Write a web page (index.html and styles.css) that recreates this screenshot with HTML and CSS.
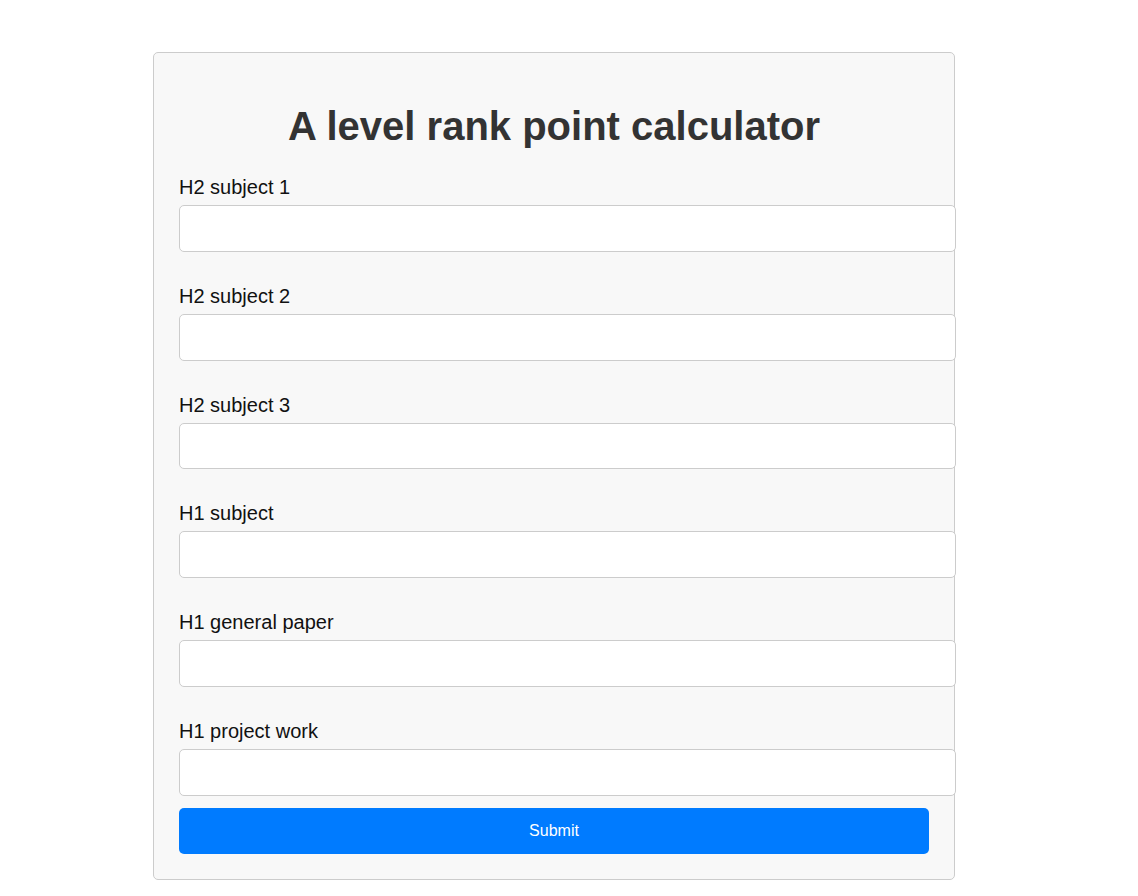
FILE: index.html
```html
<!DOCTYPE html>
<html lang="en">
<head>
<meta charset="utf-8">
<title>A level rank point calculator</title>
<link rel="stylesheet" href="styles.css">
</head>
<body>
<div class="card">
  <h1 class="title">A level rank point calculator</h1>
  <form class="form">
    <div class="group">
      <label class="label" for="s1">H2 subject 1</label>
      <input class="field" id="s1" type="text">
    </div>
    <div class="group">
      <label class="label" for="s2">H2 subject 2</label>
      <input class="field" id="s2" type="text">
    </div>
    <div class="group">
      <label class="label" for="s3">H2 subject 3</label>
      <input class="field" id="s3" type="text">
    </div>
    <div class="group">
      <label class="label" for="s4">H1 subject</label>
      <input class="field" id="s4" type="text">
    </div>
    <div class="group">
      <label class="label" for="s5">H1 general paper</label>
      <input class="field" id="s5" type="text">
    </div>
    <div class="group last">
      <label class="label" for="s6">H1 project work</label>
      <input class="field" id="s6" type="text">
    </div>
    <button class="submit" type="button">Submit</button>
  </form>
</div>
</body>
</html>
```
FILE: styles.css
```css
html, body {
  margin: 0;
  padding: 0;
  background: #ffffff;
}
body {
  font-family: "Liberation Sans", Arial, sans-serif;
}
.card {
  box-sizing: border-box;
  width: 802px;
  margin: 52px 0 16px 153px;
  padding: 25px;
  background: #f8f8f8;
  border: 1px solid #cccccc;
  border-radius: 5px;
}
.title {
  margin: 25px 0 27px;
  font-size: 40px;
  line-height: 46px;
  font-weight: bold;
  color: #333333;
  text-align: center;
}
.form {
  display: flex;
  flex-direction: column;
}
.group {
  display: flex;
  flex-direction: column;
  margin-bottom: 33px;
}
.group.last {
  margin-bottom: 12.5px;
}
.label {
  font-size: 20px;
  line-height: 23px;
  color: #111111;
  margin-bottom: 6px;
}
.field {
  box-sizing: border-box;
  width: 777px;
  height: 46.8px;
  padding: 0 12px;
  border: 1px solid #cccccc;
  border-radius: 5px;
  background: #ffffff;
  font-family: "Liberation Sans", Arial, sans-serif;
  font-size: 17px;
  outline: none;
}
.submit {
  box-sizing: border-box;
  width: 750px;
  height: 45.5px;
  border: none;
  border-radius: 5px;
  background: #007bff;
  color: #ffffff;
  font-family: "Liberation Sans", Arial, sans-serif;
  font-size: 16px;
  cursor: pointer;
}
```
